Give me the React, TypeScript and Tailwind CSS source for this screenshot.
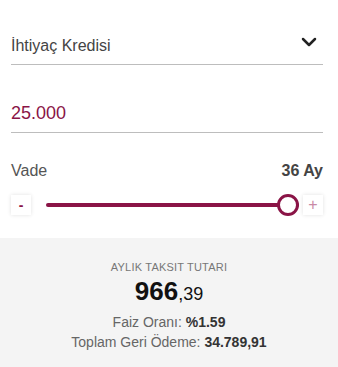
import { ChevronDown } from 'lucide-react'

export default function App() {
  const value = 36
  const min = 3
  const max = 36
  const pct = ((value - min) / (max - min)) * 100

  return (
    <div className="w-[338px] h-[367px] bg-white flex flex-col font-['Liberation_Sans',Arial,sans-serif]">
      <div className="pl-[11px] pr-[15px] pt-[27px] pb-[22px]">
        {/* kredi türü */}
        <div className="h-[38px] flex items-center justify-between border-b border-[#bdbdbd]">
          <span className="text-[16px] text-[#444]">İhtiyaç Kredisi</span>
          <ChevronDown className="w-[24px] h-[24px] mr-[2px] -mt-[7px] text-[#222]" strokeWidth={2.5} />
        </div>

        {/* tutar */}
        <div className="mt-[30px] h-[38px] flex items-center border-b border-[#bdbdbd]">
          <span className="text-[18px] text-[#8a1446]">25.000</span>
        </div>

        {/* vade */}
        <div className="mt-[26px] flex items-center justify-between">
          <span className="text-[16px] text-[#555]">Vade</span>
          <span className="text-[16px] font-bold text-[#444]">{value} Ay</span>
        </div>

        <div className="mt-[11px] flex items-center">
          <button className="w-[20px] h-[20px] flex items-center justify-center bg-white shadow-[0_0_4px_rgba(0,0,0,0.12)] text-[#8a1446] font-bold text-[14px] leading-none">
            -
          </button>
          <div className="relative flex-1 h-[22px] ml-[15px] mr-[4px] flex items-center">
            <div className="w-full h-[4px] rounded-full bg-[#8a1446]" />
            <div
              className="absolute top-0 w-[22px] h-[22px] rounded-full bg-white border-[3px] border-[#8a1446]"
              style={{ left: `calc(${pct}% - ${pct * 0.22}px)` }}
            />
          </div>
          <button className="w-[20px] h-[20px] flex items-center justify-center bg-white shadow-[0_0_4px_rgba(0,0,0,0.12)] text-[#c98aa6] text-[16px] leading-none">
            +
          </button>
        </div>
      </div>

      {/* sonuç */}
      <div className="flex-1 bg-[#f4f4f4] flex flex-col items-center pt-[21px]">
        <span className="text-[11px] text-[#777] tracking-[0.2px]">AYLIK TAKSIT TUTARI</span>
        <div className="mt-[2px] text-[#111] leading-none">
          <span className="text-[26px] font-bold">966</span>
          <span className="text-[18px]">,39</span>
        </div>
        <div className="mt-[8px] text-[14px] leading-[20px] text-[#666]">
          Faiz Oranı: <span className="font-bold text-[#333]">%1.59</span>
        </div>
        <div className="text-[14px] leading-[20px] text-[#666]">
          Toplam Geri Ödeme: <span className="font-bold text-[#333]">34.789,91</span>
        </div>
      </div>
    </div>
  )
}
